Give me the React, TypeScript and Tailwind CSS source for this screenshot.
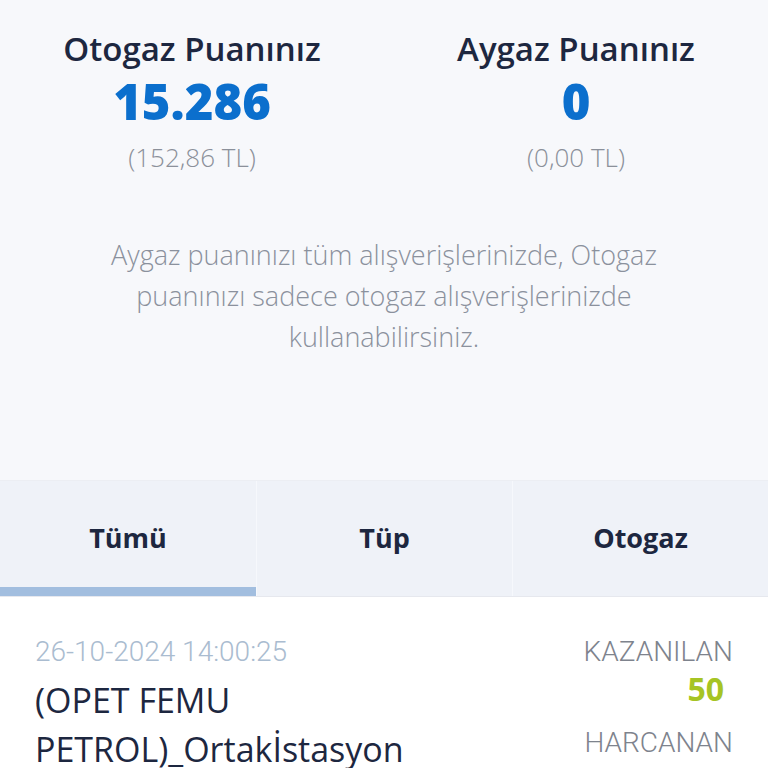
import React, { useState } from "react";

const tabs = ["Tümü", "Tüp", "Otogaz"];

export default function App() {
  const [active, setActive] = useState(0);

  return (
    <div className="w-[768px] h-[768px] overflow-hidden bg-white font-['Open_Sans',sans-serif]">
      {/* Puan özeti */}
      <div className="h-[480px] bg-[#f7f8fb] pt-[26px]">
        <div className="grid grid-cols-2">
          <PointBox title="Otogaz Puanınız" value="15.286" tl="(152,86 TL)" />
          <PointBox title="Aygaz Puanınız" value="0" tl="(0,00 TL)" />
        </div>
        <p className="mt-[60px] px-[80px] text-center text-[27px] leading-[41px] font-light text-[#8b919d]">
          Aygaz puanınızı tüm alışverişlerinizde, Otogaz puanınızı sadece otogaz alışverişlerinizde kullanabilirsiniz.
        </p>
      </div>

      {/* Sekmeler */}
      <div className="grid grid-cols-3 h-[117px] bg-[#eff2f8] border-t border-[#eceef3] border-b border-b-[#e6e8ee]">
        {tabs.map((t, i) => (
          <button
            key={t}
            onClick={() => setActive(i)}
            className={`relative flex items-center justify-center text-[27px] font-bold text-[#1d2740] ${i > 0 ? "border-l border-[#f6f8fc]" : ""}`}
          >
            <span>{t}</span>
            {active === i && <span className="absolute left-0 right-0 bottom-0 h-[9px] bg-[#a2bedf]" />}
          </button>
        ))}
      </div>

      {/* Hareketler */}
      <div className="flex justify-between pl-[35px] pr-[35px] pt-[38px]">
        <div>
          <p className="text-[28px] leading-[34px] text-[#aabcd0] font-['Roboto',sans-serif] font-light">26-10-2024 14:00:25</p>
          <p className="mt-[7px] text-[34px] leading-[49px] font-medium text-[#1d2740] w-[440px]">
            (OPET FEMU PETROL)_Ortakİstasyon
          </p>
        </div>
        <div className="flex flex-col items-end font-['Roboto',sans-serif]">
          <p className="text-[28px] leading-[34px] font-light text-[#7e838d]">KAZANILAN</p>
          <p className="mt-[1px] pr-[9px] text-[32px] leading-[38px] font-bold text-[#a6c424] font-['Open_Sans',sans-serif]">50</p>
          <p className="mt-[18px] text-[28px] leading-[34px] font-light text-[#7e838d]">HARCANAN</p>
          <p className="mt-[2px] pr-[9px] text-[32px] leading-[38px] font-bold text-[#e0454f] font-['Open_Sans',sans-serif]">0</p>
        </div>
      </div>
    </div>
  );
}

function PointBox({ title, value, tl }: { title: string; value: string; tl: string }) {
  return (
    <div className="flex flex-col items-center">
      <p className="text-[33px] leading-[46px] font-semibold text-[#1d2740]">{title}</p>
      <p className="text-[49px] leading-[58px] font-extrabold text-[#0b6fcd]">{value}</p>
      <p className="mt-[10px] text-[26px] leading-[34px] font-light text-[#8b909a]">{tl}</p>
    </div>
  );
}
